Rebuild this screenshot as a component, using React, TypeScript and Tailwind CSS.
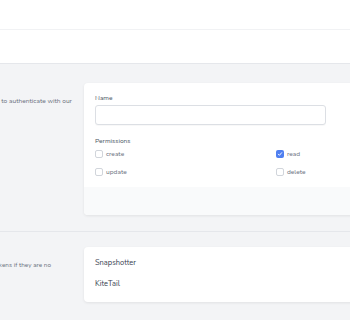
import React from "react";

function Check({ checked, label }: { checked?: boolean; label: string }) {
  return (
    <div className="flex items-center h-[10px]">
      {checked ? (
        <span className="w-[8px] h-[8px] rounded-[2px] bg-[#4f7ff0] flex items-center justify-center">
          <svg width="6" height="6" viewBox="0 0 16 16" fill="none">
            <path d="M3.5 8.5l3 3 6-7" stroke="white" strokeWidth="2.5" strokeLinecap="round" strokeLinejoin="round" />
          </svg>
        </span>
      ) : (
        <span className="w-[8px] h-[8px] rounded-[2px] border border-[#d1d5db] bg-white" />
      )}
      <span className="ml-[3px] text-[6.6px] leading-[10px] text-[#6b7280]">{label}</span>
    </div>
  );
}

export default function App() {
  return (
    <div
      className="w-[350px] h-[320px] overflow-hidden bg-[#f3f4f6]"
      style={{ fontFamily: "Nunito, 'Open Sans', sans-serif" }}
    >
      <div className="h-[30px] bg-white border-b border-[#f1f2f4]" />
      <div className="h-[34px] bg-white border-b border-[#e5e7eb]" />
      <div className="ml-[-110px] w-[570px]">
        <div className="flex gap-[12px] pt-[19px]">
          <div className="w-[182px] shrink-0">
            <div className="h-[13px] text-[9px] leading-[13px] font-medium text-[#111827] whitespace-nowrap">
              Create API Token
            </div>
            <div className="text-[6.6px] leading-[10px] text-[#6b7280] whitespace-nowrap">
              API tokens allow third-party services to authenticate with our
              <br />
              application on your behalf.
            </div>
          </div>
          <div className="w-[376px] shrink-0 bg-white rounded-[4px] shadow-[0_1px_3px_rgba(0,0,0,0.08)] overflow-hidden">
            <div className="px-[11px] pt-[10px] pb-[10px]">
              <div className="text-[6.6px] leading-[10px] text-[#4b5563]">Name</div>
              <div className="mt-[2px] w-[231px] h-[20px] rounded-[3px] border border-[#dcdfe4] bg-white shadow-[0_1px_1px_rgba(0,0,0,0.03)]" />
              <div className="mt-[11px] text-[6.6px] leading-[10px] text-[#4b5563]">Permissions</div>
              <div className="mt-[3px] grid grid-cols-2 gap-x-[8px] gap-y-[8px]">
                <Check label="create" />
                <Check checked label="read" />
                <Check label="update" />
                <Check label="delete" />
              </div>
            </div>
            <div className="h-[28px] bg-[#f9fafb]" />
          </div>
        </div>
        <div className="pt-[16px] pb-[15px]">
          <div className="border-t border-[#e5e7eb]" />
        </div>
        <div className="flex gap-[12px]">
          <div className="w-[182px] shrink-0">
            <div className="h-[13px] text-[9px] leading-[13px] font-medium text-[#111827] whitespace-nowrap">
              Manage API Tokens
            </div>
            <div className="text-[6.4px] leading-[10px] text-[#6b7280] whitespace-nowrap">
              You may delete any of your existing tokens if they are no
              <br />
              longer needed.
            </div>
          </div>
          <div className="w-[376px] shrink-0 bg-white rounded-[4px] shadow-[0_1px_3px_rgba(0,0,0,0.08)] px-[11px] pt-[11px] pb-[13px]">
            <div className="text-[7.5px] leading-[10px] text-[#374151]">Snapshotter</div>
            <div className="mt-[11px] text-[7.5px] leading-[10px] text-[#374151]">KiteTail</div>
          </div>
        </div>
      </div>
    </div>
  );
}
